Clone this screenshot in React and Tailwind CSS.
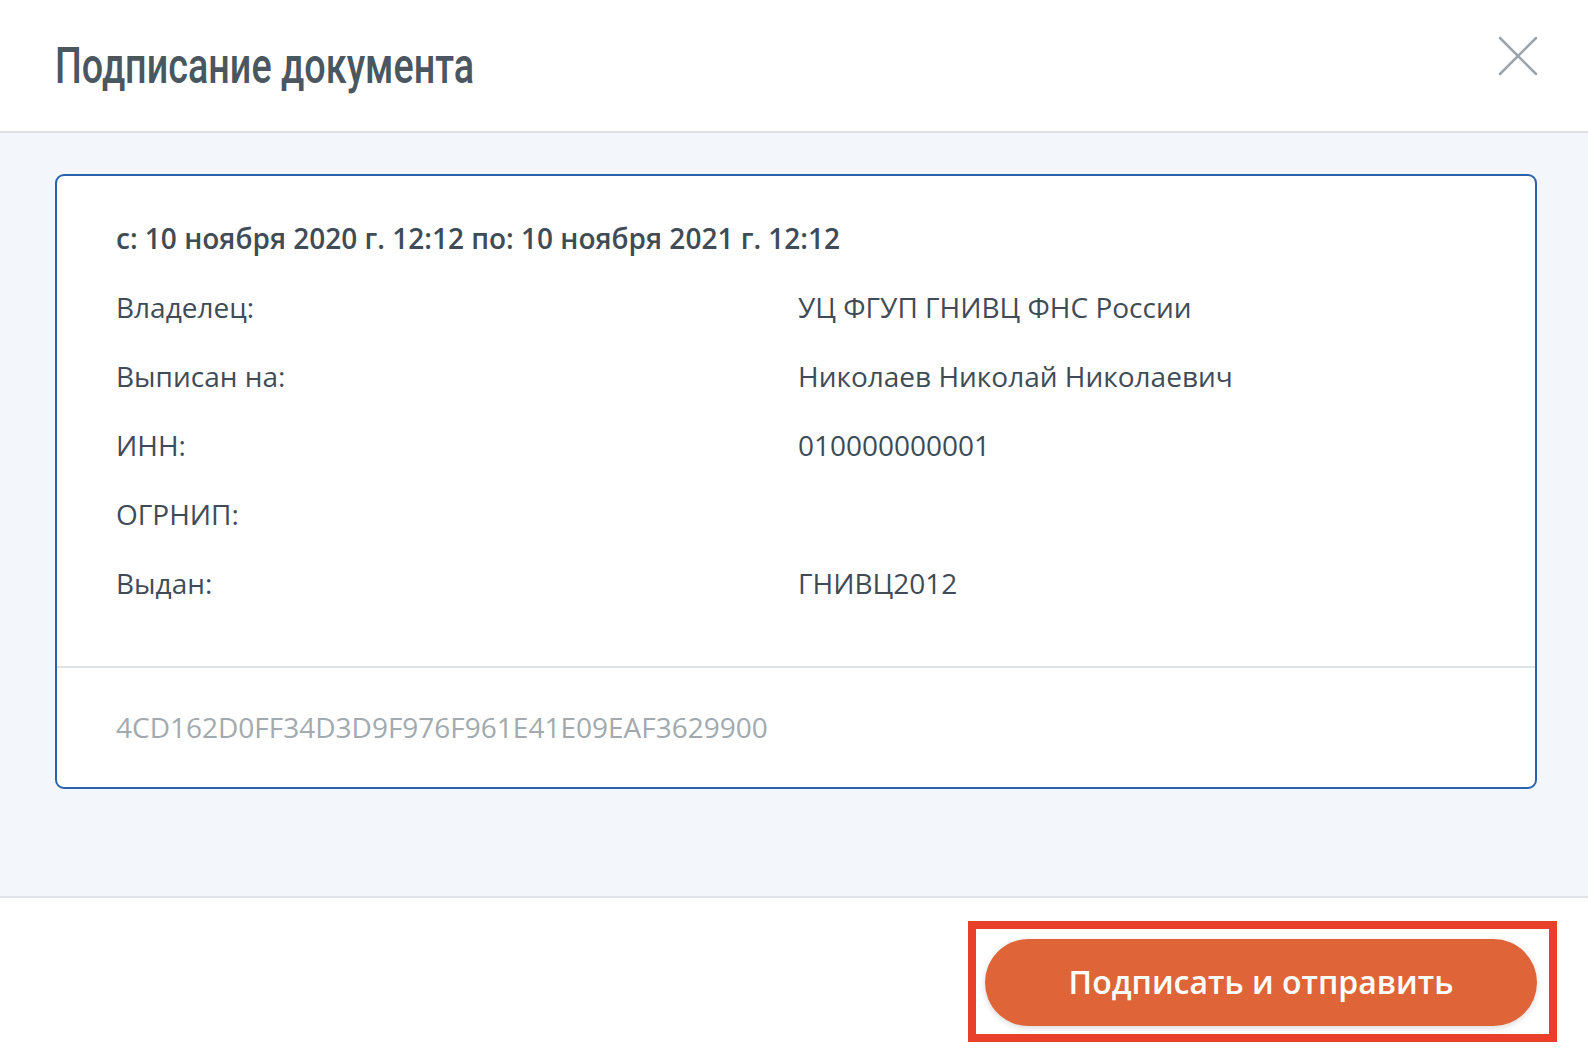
const rows = [
  ['Владелец:', 'УЦ ФГУП ГНИВЦ ФНС России'],
  ['Выписан на:', 'Николаев Николай Николаевич'],
  ['ИНН:', '010000000001'],
  ['ОГРНИП:', ''],
  ['Выдан:', 'ГНИВЦ2012'],
];

function CloseIcon() {
  return (
    <svg width="40" height="40" viewBox="0 0 40 40" fill="none">
      <path d="M2 2 L38 38 M38 2 L2 38" stroke="#9aa4aa" strokeWidth="2.5" strokeLinecap="round" />
    </svg>
  );
}

export default function App() {
  return (
    <div className="w-[1588px] h-[1064px] bg-white flex flex-col font-['Open_Sans',sans-serif] text-[#3f4c57]">
      <div className="h-[133px] shrink-0 flex items-center justify-between pl-[55px] pr-[50px] border-b-2 border-[#dcdfe3]">
        <h1 className="text-[50px] leading-none font-medium text-[#4a5660] font-['Roboto',sans-serif] scale-x-[0.755] origin-left whitespace-nowrap">
          Подписание документа
        </h1>
        <button className="w-[40px] h-[40px] mb-[20px] flex items-center justify-center">
          <CloseIcon />
        </button>
      </div>

      <div className="bg-[#f3f6fa] pt-[41px] pb-[107px] pl-[55px] pr-[51px] border-b-2 border-[#dfe2e6]">
        <div className="bg-white border-2 border-[#2a62ad] rounded-[9px]">
          <div className="pl-[59px] pr-[59px] pt-[28px] pb-[48px] text-[28px] leading-[69px]">
            <div className="font-semibold">с: 10 ноября 2020 г. 12:12 по: 10 ноября 2021 г. 12:12</div>
            {rows.map(([label, value]) => (
              <div key={label} className="grid grid-cols-2">
                <div>{label}</div>
                <div className="pl-[2px]">{value}</div>
              </div>
            ))}
          </div>
          <div className="border-t-2 border-[#dde2e7] pl-[59px] py-[25px] text-[28px] leading-[69px] text-[#a2aaaf]">
            4CD162D0FF34D3D9F976F961E41E09EAF3629900
          </div>
        </div>
      </div>

      <div className="flex-1 flex items-center justify-end pr-[31px]">
        <div className="border-[8px] border-[#e8402a] pl-[9px] pr-[12px] pt-[10px] pb-[8px] bg-white">
          <button className="w-[552px] h-[87px] rounded-full bg-[#df6437] text-white text-[32px] font-semibold shadow-[0_2px_6px_rgba(0,0,0,0.15)]">
            Подписать и отправить
          </button>
        </div>
      </div>
    </div>
  );
}
